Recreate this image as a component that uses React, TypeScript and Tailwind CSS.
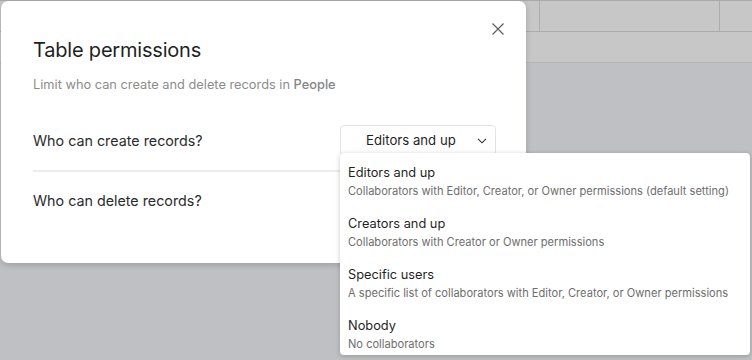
const options = [
  { label: 'Editors and up', desc: 'Collaborators with Editor, Creator, or Owner permissions (default setting)' },
  { label: 'Creators and up', desc: 'Collaborators with Creator or Owner permissions' },
  { label: 'Specific users', desc: 'A specific list of collaborators with Editor, Creator, or Owner permissions' },
  { label: 'Nobody', desc: 'No collaborators' },
];

function Chevron() {
  return (
    <svg width="10" height="6" viewBox="0 0 10 6" fill="none" className="text-[#333]">
      <path d="M1 0.8 L5 4.8 L9 0.8" stroke="currentColor" strokeWidth="1.1" />
    </svg>
  );
}

function SelectButton({ value }: { value?: string }) {
  return (
    <div className="flex h-[31px] w-[156px] items-center rounded-[4px] border border-[#e3e3e3] bg-white pl-[25px] pr-[8px]">
      <span className="flex-1 text-[13.2px] text-[#1f1f1f]">{value}</span>
      <Chevron />
    </div>
  );
}

export default function App() {
  return (
    <div
      className="relative h-[360px] w-[752px] overflow-hidden bg-[#bfc0c4]"
      style={{ fontFamily: 'Inter, "Noto Sans", sans-serif' }}
    >
      {/* dimmed grid behind the dialog */}
      <div className="border-t border-[#a9a9a9] bg-[#c7c7c7]">
        <div className="flex h-[31px] border-b border-[#adadad]">
          <div className="w-[540px] border-r border-[#adadad]" />
          <div className="w-[180px] border-r border-[#adadad]" />
          <div className="flex-1" />
        </div>
        <div className="h-[31px] border-b border-[#b3b3b3]" />
      </div>

      {/* dialog */}
      <div className="absolute left-[1px] top-[1px] h-[262px] w-[525px] rounded-[7px] bg-white shadow-[0_2px_6px_rgba(0,0,0,0.18)]">
        <div className="flex items-start justify-between pl-[32px] pr-[22px] pt-[34px]">
          <h1 className="text-[20px] leading-[30px] tracking-[-0.2px] text-[#1d1f25]">Table permissions</h1>
          <svg width="12" height="12" viewBox="0 0 12 12" className="mt-[-12px] text-[#5a5a5a]">
            <path d="M0.5 0.5 L11.5 11.5 M11.5 0.5 L0.5 11.5" stroke="currentColor" strokeWidth="1.1" />
          </svg>
        </div>
        <p className="mt-[10px] pl-[32px] text-[12.8px] text-[#8c8c8c]">
          Limit who can create and delete records in <span className="font-medium text-[#858585]">People</span>
        </p>
        <div className="mx-[30px] mt-[31px] pl-[2px]">
          <div className="flex items-center justify-between border-b-2 border-[#ececec] pb-[14px]">
            <span className="text-[14.3px] text-[#2b2b2b]">Who can create records?</span>
            <SelectButton value="Editors and up" />
          </div>
          <div className="flex items-center justify-between pt-[13px]">
            <span className="text-[14.3px] text-[#2b2b2b]">Who can delete records?</span>
            <SelectButton />
          </div>
        </div>
      </div>

      {/* open dropdown menu */}
      <div className="absolute left-[340px] top-[153px] flex w-[410px] flex-col gap-[15px] rounded-[4px] bg-white pb-[3px] pt-[10px] shadow-[0_1px_5px_rgba(0,0,0,0.22)]">
        {options.map((o) => (
          <div key={o.label} className="flex flex-col px-[8px]">
            <span className="text-[12.8px] leading-[20px] text-[#1f1f1f]">{o.label}</span>
            <span className="text-[11.1px] leading-[16px] text-[#6e6e6e]">{o.desc}</span>
          </div>
        ))}
      </div>
    </div>
  );
}
